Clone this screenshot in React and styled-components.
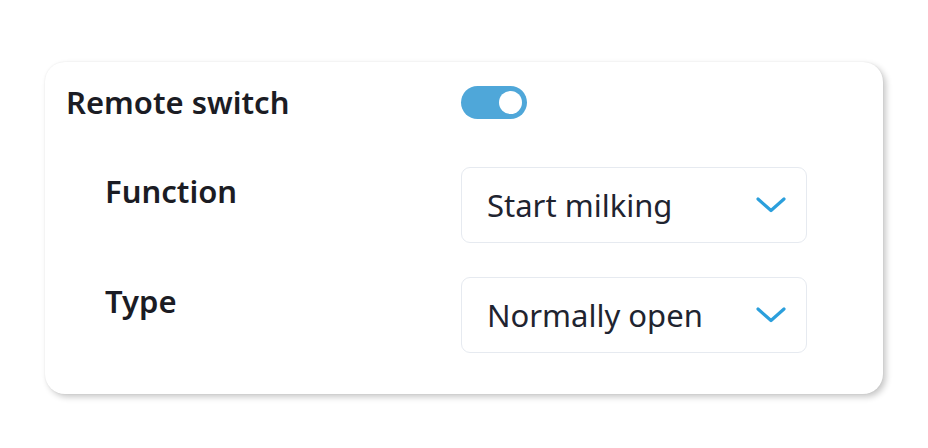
import React from "react";
import styled, { createGlobalStyle } from "styled-components";

const Global = createGlobalStyle`
  html, body { margin: 0; padding: 0; background: #ffffff; }
  body { font-family: "Noto Sans", "Open Sans", sans-serif; }
`;

const Page = styled.div`
  padding: 62px 0 0 45px;
  width: 928px;
  height: 448px;
  box-sizing: border-box;
`;

const Card = styled.div`
  width: 838px;
  height: 332px;
  box-sizing: border-box;
  background: #fff;
  border-radius: 20px;
  box-shadow: 3px 3px 6px rgba(0, 0, 0, 0.22), 0 0 2px rgba(0, 0, 0, 0.07);
  padding: 24px 0 0 21px;
  display: grid;
  grid-template-columns: 395px 346px;
  grid-auto-rows: auto;
  align-content: start;
  row-gap: 34px;
`;

const HeaderLabel = styled.div`
  font-size: 31px;
  font-weight: 600;
  color: #1b1c24;
  line-height: 33px;
  height: 33px;
  display: flex;
  align-items: center;
`;

const SubLabel = styled.div`
  font-size: 31px;
  font-weight: 600;
  color: #1b1c24;
  line-height: 40px;
  padding-left: 39px;
  margin-top: 4px;
`;

const HeaderCell = styled.div`
  height: 33px;
  display: flex;
  align-items: center;
  margin-bottom: 14px;
`;

const Toggle = styled.div`
  width: 66px;
  height: 33px;
  border-radius: 17px;
  background: #4fa7d9;
  position: relative;
`;

const Knob = styled.div`
  position: absolute;
  width: 23px;
  height: 23px;
  border-radius: 50%;
  background: #fff;
  top: 5px;
  right: 5px;
`;

const Select = styled.div`
  height: 76px;
  box-sizing: border-box;
  border: 1px solid #e6eaf0;
  border-radius: 9px;
  display: flex;
  align-items: center;
  justify-content: space-between;
  padding: 0 20px 0 25px;
  font-size: 31px;
  font-weight: 400;
  color: #1f2430;
`;

const Chevron = () => (
  <svg width="30" height="16" viewBox="0 0 30 16" fill="none">
    <path d="M2 2 L15 13.5 L28 2" stroke="#2b9fdc" strokeWidth="3.2" strokeLinecap="round" strokeLinejoin="round" />
  </svg>
);

export default function App() {
  return (
    <>
      <Global />
      <Page>
        <Card>
          <HeaderLabel>Remote switch</HeaderLabel>
          <HeaderCell>
            <Toggle>
              <Knob />
            </Toggle>
          </HeaderCell>
          <SubLabel>Function</SubLabel>
          <Select>
            <span>Start milking</span>
            <Chevron />
          </Select>
          <SubLabel>Type</SubLabel>
          <Select>
            <span>Normally open</span>
            <Chevron />
          </Select>
        </Card>
      </Page>
    </>
  );
}
